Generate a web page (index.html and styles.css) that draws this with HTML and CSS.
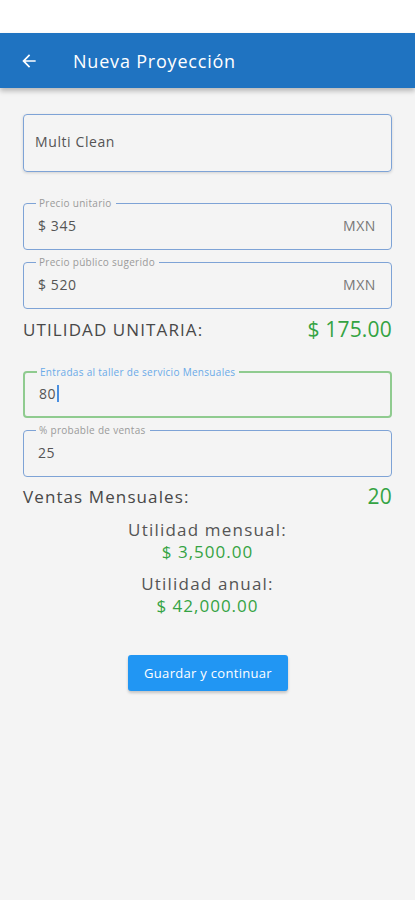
FILE: index.html
```html
<!DOCTYPE html>
<html lang="es">
<head>
    <meta charset="UTF-8">
    <meta name="viewport" content="width=device-width, initial-scale=1.0">
    <title>Nueva Proyección</title>
    <link rel="stylesheet" href="styles.css">
</head>
<body>
    <div class="status-bar"></div>
    <header class="app-bar">
        <svg class="back" width="20" height="20" viewBox="0 0 24 24">
            <path d="M20 11H7.83l5.59-5.59L12 4l-8 8 8 8 1.41-1.41L7.83 13H20v-2z" fill="#ffffff"/>
        </svg>
        <h1>Nueva Proyección</h1>
    </header>

    <main class="form">
        <div class="field plain">
            <span class="value">Multi Clean</span>
        </div>

        <div class="field outlined first">
            <label>Precio unitario</label>
            <span class="value">$ 345</span>
            <span class="suffix">MXN</span>
        </div>
        <div class="field outlined">
            <label>Precio público sugerido</label>
            <span class="value">$ 520</span>
            <span class="suffix">MXN</span>
        </div>

        <div class="result-row">
            <span class="caps">UTILIDAD UNITARIA:</span>
            <span class="green big">$ 175.00</span>
        </div>

        <div class="field outlined focused after-row">
            <label>Entradas al taller de servicio Mensuales</label>
            <span class="value">80<span class="caret"></span></span>
        </div>
        <div class="field outlined">
            <label>% probable de ventas</label>
            <span class="value">25</span>
        </div>

        <div class="result-row small">
            <span>Ventas Mensuales:</span>
            <span class="green big">20</span>
        </div>

        <div class="totals">
            <div class="total">
                <p>Utilidad mensual:</p>
                <p class="green">$ 3,500.00</p>
            </div>
            <div class="total">
                <p>Utilidad anual:</p>
                <p class="green">$ 42,000.00</p>
            </div>
        </div>

        <div class="actions">
            <button type="button" class="btn">Guardar y continuar</button>
        </div>
    </main>
</body>
</html>
```

FILE: styles.css
```css
body {
    margin: 0;
    background-color: #f4f4f4;
    font-family: "Open Sans", "Noto Sans", Arial, sans-serif;
    color: #555;
    letter-spacing: 0.6px;
    height: 900px;
}
.status-bar {
    height: 33px;
    background-color: #ffffff;
}
.app-bar {
    height: 55px;
    background-color: #1f73c1;
    display: flex;
    align-items: center;
    padding-left: 19px;
    box-shadow: 0 3px 5px rgba(0, 0, 0, 0.25);
}
.app-bar h1 {
    margin: 0 0 0 34px;
    color: #ffffff;
    font-size: 18px;
    font-weight: 400;
    letter-spacing: 0.8px;
}
.form {
    padding: 0 23px;
}
.field {
    box-sizing: border-box;
    display: flex;
    align-items: center;
    justify-content: space-between;
    border: 1.5px solid #7ea3d6;
    border-radius: 4px;
    padding: 0 15px 0 14px;
    font-size: 14px;
    color: #555;
}
.plain {
    margin-top: 26px;
    height: 58px;
    padding-left: 11px;
    padding-bottom: 3px;
    box-shadow: 0 1px 3px rgba(0, 0, 0, 0.15);
}
.outlined {
    position: relative;
    height: 47px;
    margin-top: 12px;
    padding-bottom: 2px;
}
.outlined.first {
    margin-top: 31px;
}
.outlined.after-row {
    margin-top: 22px;
}
.outlined label {
    position: absolute;
    top: -8px;
    left: 12px;
    padding: 0 4px 0 3px;
    background-color: #f4f4f4;
    font-size: 10px;
    line-height: 14px;
    letter-spacing: 0.3px;
    color: #9a9a9a;
}
.focused {
    border: 2px solid #8fcb8f;
}
.focused label {
    color: #6aaae8;
}
.caret {
    display: inline-block;
    width: 1.5px;
    height: 17px;
    margin-left: 1px;
    background-color: #4a8fe0;
    vertical-align: -3px;
}
.suffix {
    color: #777;
}
.result-row {
    display: flex;
    justify-content: space-between;
    align-items: center;
    height: 40px;
    font-size: 17px;
    letter-spacing: 1.1px;
    color: #484848;
}
.result-row.small {
    height: 38px;
}
.green {
    color: #34a343;
}
.big {
    font-size: 21px;
    letter-spacing: 0.2px;
}
.totals {
    margin-top: 4px;
    text-align: center;
    font-size: 17px;
    letter-spacing: 1.2px;
}
.total {
    margin-bottom: 10px;
}
.total p {
    margin: 0;
    line-height: 22px;
}
.total p.green {
    letter-spacing: 1px;
}
.actions {
    display: flex;
    justify-content: center;
    margin-top: 38px;
}
.btn {
    width: 160px;
    height: 36px;
    margin-left: 1px;
    border: none;
    border-radius: 3px;
    background-color: #2196f3;
    color: #ffffff;
    font-family: inherit;
    font-size: 13px;
    letter-spacing: 0.3px;
    box-shadow: 0 2px 3px rgba(0, 0, 0, 0.2);
}
```
